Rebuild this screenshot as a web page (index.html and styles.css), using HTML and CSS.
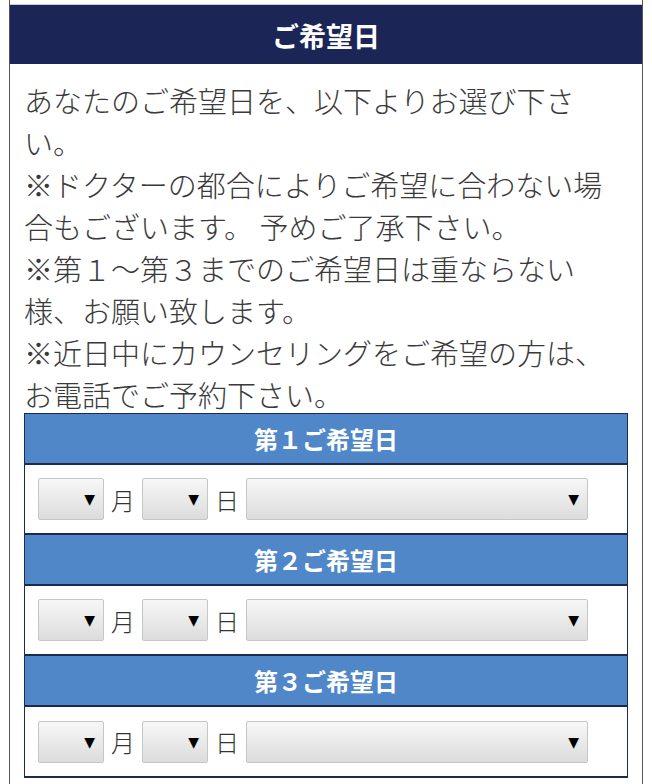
FILE: index.html
```html
<!DOCTYPE html>
<html lang="ja">
<head>
<meta charset="utf-8">
<link rel="stylesheet" href="styles.css">
</head>
<body>
<div class="wrap">
  <div class="prev"></div>
  <h2 class="title">ご希望日</h2>
  <div class="content">
    <p class="lead">あなたのご希望日を、以下よりお選び下さい。<br>※ドクターの都合によりご希望に合わない場合もございます。 予めご了承下さい。<br>※第１～第３までのご希望日は重ならない様、お願い致します。<br>※近日中にカウンセリングをご希望の方は、お電話でご予約下さい。</p>
    <div class="table">
      <div class="th">第１ご希望日</div>
      <div class="td">
        <div class="sel sel-s">▼</div><span class="unit">月</span>
        <div class="sel sel-s">▼</div><span class="unit">日</span>
        <div class="sel sel-l">▼</div>
      </div>
      <div class="th">第２ご希望日</div>
      <div class="td">
        <div class="sel sel-s">▼</div><span class="unit">月</span>
        <div class="sel sel-s">▼</div><span class="unit">日</span>
        <div class="sel sel-l">▼</div>
      </div>
      <div class="th">第３ご希望日</div>
      <div class="td">
        <div class="sel sel-s">▼</div><span class="unit">月</span>
        <div class="sel sel-s">▼</div><span class="unit">日</span>
        <div class="sel sel-l">▼</div>
      </div>
    </div>
  </div>
</div>
</body>
</html>
```
FILE: styles.css
```css
html, body {
  margin: 0;
  padding: 0;
  background: #fff;
}
body {
  font-family: "Noto Sans CJK JP", "Noto Sans", sans-serif;
  color: #333;
}
.wrap {
  margin: 0 9px;
  border-left: 1px solid #555;
  border-right: 1px solid #555;
  min-height: 784px;
  box-sizing: border-box;
}
.prev {
  height: 4px;
  border-bottom: 1px solid #c9ccd4;
}
.title {
  margin: 0;
  height: 59px;
  background: #1c2656;
  color: #fff;
  font-size: 27px;
  font-weight: bold;
  text-align: center;
  line-height: 61px;
}
.content {
  padding: 15px 14px 0;
}
.lead {
  margin: 0;
  font-size: 29px;
  font-weight: 300;
  line-height: 42px;
  color: #3a3a3a;
}
.table {
  margin-top: -2px;
  border: 1px solid #1c2a50;
  border-bottom: 2px solid #1c2a50;
}
.th {
  height: 49px;
  background: #4f87c8;
  color: #fff;
  font-size: 24px;
  font-weight: bold;
  text-align: center;
  line-height: 49px;
  border-bottom: 2px solid #1c2a50;
}
.td {
  height: 68px;
  display: flex;
  align-items: center;
  padding: 0 13px;
  background: #fff;
  border-bottom: 2px solid #1c2a50;
}
.td:last-child {
  border-bottom: 0;
  height: 69px;
}
.sel {
  height: 42px;
  box-sizing: border-box;
  border: 1px solid #c6c6c6;
  border-radius: 2px;
  background: linear-gradient(#f7f7f7, #dcdcdc);
  display: flex;
  align-items: center;
  justify-content: flex-end;
  padding-right: 8px;
  font-size: 14px;
  color: #000;
  font-family: "DejaVu Sans", sans-serif;
}
.sel-s {
  width: 66px;
}
.sel-l {
  width: 342px;
}
.unit {
  font-size: 24px;
  font-weight: 300;
  color: #333;
  width: 38px;
  text-align: center;
}
```
